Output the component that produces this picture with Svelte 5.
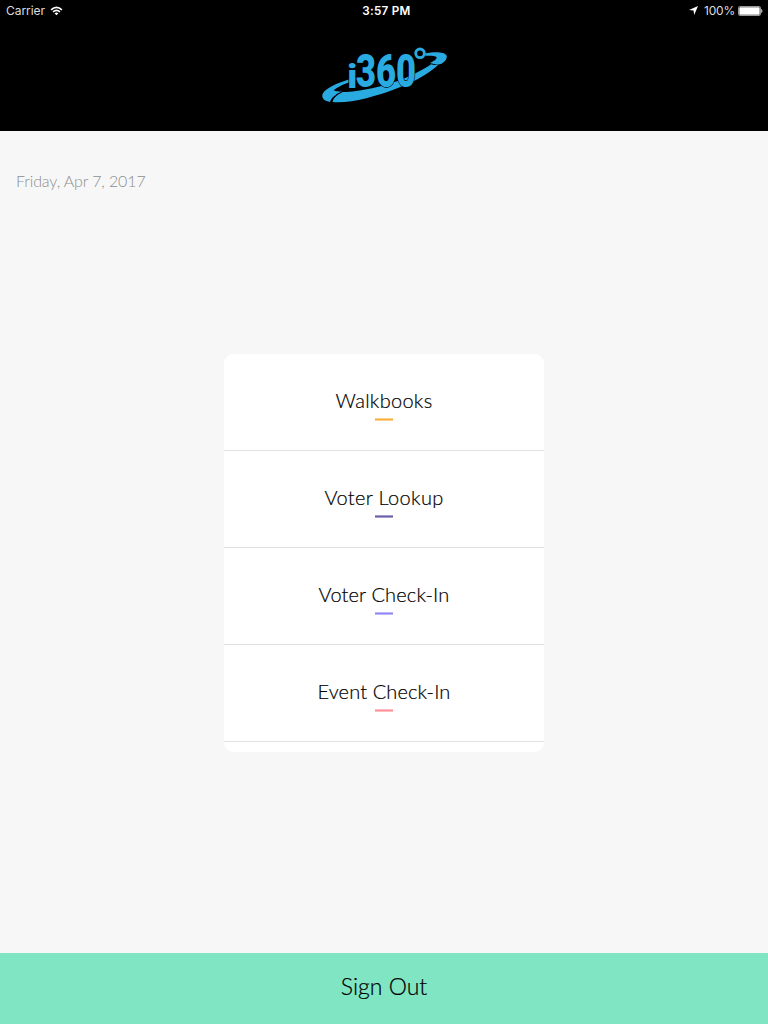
<script>
  const items = [
    { label: 'Walkbooks', color: '#fcb040', spacing: 0.28 },
    { label: 'Voter Lookup', color: '#6b5fac', spacing: 0.35 },
    { label: 'Voter Check-In', color: '#9089f5', spacing: 0.14 },
    { label: 'Event Check-In', color: '#ff9198', spacing: 0.12 }
  ];
</script>

<div class="screen">
  <header>
    <div class="status">
      <div class="left">
        <span class="carrier">Carrier</span>
        <svg width="13" height="10" viewBox="0 0 14 10" fill="none" stroke="#fff">
          <path d="M1.2 3.7Q7-1.7 12.8 3.7" stroke-width="1.8" />
          <path d="M3.3 6Q7 2.7 10.7 6" stroke-width="1.6" />
          <path d="M4.9 7.4Q7 5.6 9.1 7.4L7 9.6Z" fill="#fff" stroke="none" />
        </svg>
      </div>
      <span class="time">3:57 PM</span>
      <div class="right">
        <svg class="loc" width="9" height="9" viewBox="0 0 9 9"><path d="M9 0L5.2 9L4.5 4.6L0 4Z" fill="#fff" /></svg>
        <span class="pct">100%</span>
        <svg width="25" height="10" viewBox="0 0 25 10">
          <rect x=".5" y=".5" width="22" height="9" rx="1.2" fill="none" stroke="#999" />
          <rect x="1.3" y="1.3" width="20.4" height="7.4" rx=".5" fill="#fff" />
          <path d="M23.5 3.2Q25 5 23.5 6.8Z" fill="#ddd" stroke="#ddd" stroke-width=".5" />
        </svg>
      </div>
    </div>
    <svg class="logo" width="136" height="68" viewBox="0 0 408 204" aria-label="i360">
      <g fill="#29abe2">
        <path d="M122 113C77 122 22 144 19 166C18 177 27 184 42 186C46 174 58 163 78 154C69 155 60 155 53 151C65 141 87 129 122 120Z" />
        <path d="M50 186C51 175 62 165 80 156C120 157 205 140 270 113C304 99 333 82 345 73C354 76 361 75 368 73C330 114 233 154 151 175C113 185 77 188 50 186Z" />
        <path d="M328 40C359 34 387 36 392 47C394 57 385 67 374 72C365 75 354 73 342 69C354 63 362 57 362 53C361 47 347 47 328 47Z" />
      </g>
      <circle cx="312" cy="40" r="13" fill="#000" stroke="#29abe2" stroke-width="8.5" />
      <text class="small" x="94" y="143" textLength="30" lengthAdjust="spacingAndGlyphs">i</text>
      <text x="120" y="142" textLength="180" lengthAdjust="spacingAndGlyphs">360</text>
    </svg>
  </header>

  <main>
    <p class="date">Friday, Apr 7, 2017</p>
    <nav>
      {#each items as item}
        <button class="item">
          <span class="label" style="letter-spacing: {item.spacing}px">{item.label}</span>
          <i style="color: {item.color}"></i>
        </button>
      {/each}
    </nav>
  </main>

  <button class="signout">Sign Out</button>
</div>

<style>
  :global(body) { margin: 0; }
  .screen { width: 768px; height: 1024px; display: flex; flex-direction: column; background: #f7f7f7; font-family: Lato, sans-serif; font-weight: 300; overflow: hidden; }
  header { height: 131px; background: #000; color: #fff; display: flex; flex-direction: column; align-items: center; flex: none; }
  .status { width: 100%; height: 20px; box-sizing: border-box; padding: 0 5px 0 6px; display: grid; grid-template-columns: 1fr auto 1fr; align-items: center; font: 400 12px/20px Inter, sans-serif; }
  .left, .right { display: flex; align-items: center; }
  .left { gap: 5px; }
  .right { justify-content: flex-end; }
  .carrier { letter-spacing: -.05px; color: #ddd; padding-top: 1px; }
  .time { font-weight: 600; font-size: 11.7px; letter-spacing: .25px; margin-left: 4px; padding-top: 1px; }
  .loc { margin-right: 6px; }
  .pct { margin-right: 3px; color: #ddd; letter-spacing: -.2px; padding-top: 1px; }
  .logo { margin-top: 20px; display: block; }
  .logo text { font: 900 137px Roboto, sans-serif; fill: #29abe2; stroke: #000; stroke-width: 4px; paint-order: stroke; }
  .logo .small { font-size: 98px; }
  main { flex: 1; display: flex; flex-direction: column; align-items: center; }
  .date { align-self: flex-start; margin: 40px 0 0 16px; font-size: 16px; line-height: 20px; letter-spacing: -.12px; color: #8e8e8e; }
  nav { width: 320px; height: 398px; margin-top: 163px; background: #fff; border-radius: 10px; overflow: hidden; }
  button { font: inherit; border: 0; padding: 0; color: #000; }
  .item { width: 100%; height: 97px; display: flex; flex-direction: column; align-items: center; background: #fff; border-bottom: 1px solid #e1e1e1; box-sizing: border-box; }
  .label { font-size: 20px; line-height: 24px; margin-top: 34px; -webkit-text-stroke: .2px #000; }
  .item i { width: 18px; height: 3px; margin-top: 6px; background: linear-gradient(color-mix(in srgb, currentColor 60%, white) 1px, currentColor 1px 2px, color-mix(in srgb, currentColor 60%, white) 2px); }
  .signout { height: 71px; flex: none; background: #7fe5c2; font-size: 23px; line-height: 28px; letter-spacing: 0; padding-bottom: 5px; -webkit-text-stroke: .2px #000; }
</style>
